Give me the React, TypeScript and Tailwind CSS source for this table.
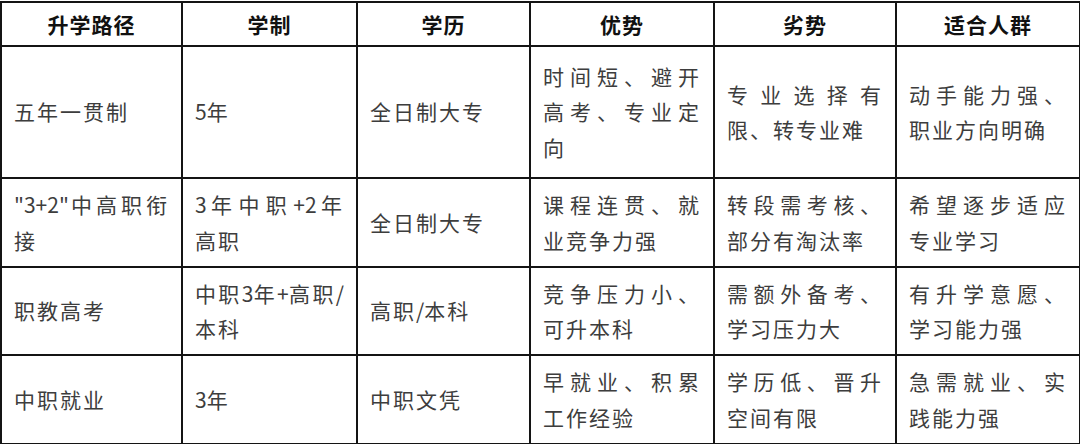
import React from "react";

const headers = ["升学路径", "学制", "学历", "优势", "劣势", "适合人群"];
const widths = [181, 175, 173, 184, 182, 184];
const rows: { h: string; cells: string[] }[] = [
  { h: "h-[132px]", cells: ["五年一贯制", "5年", "全日制大专", "时间短、避开高考、专业定向", "专业选择有限、转专业难", "动手能力强、职业方向明确"] },
  { h: "h-[89px]", cells: ["\"3+2\"中高职衔接", "3年中职+2年高职", "全日制大专", "课程连贯、就业竞争力强", "转段需考核、部分有淘汰率", "希望逐步适应专业学习"] },
  { h: "h-[88px]", cells: ["职教高考", "中职3年+高职/本科", "高职/本科", "竞争压力小、可升本科", "需额外备考、学习压力大", "有升学意愿、学习能力强"] },
  { h: "h-[89px]", cells: ["中职就业", "3年", "中职文凭", "早就业、积累工作经验", "学历低、晋升空间有限", "急需就业、实践能力强"] },
];

function Runs({ text }: { text: string }) {
  const parts = text.match(/[\x00-\x7f]+|[^\x00-\x7f]+/g) || [];
  return (
    <>
      {parts.map((p, i) =>
        /^[\x00-\x7f]+$/.test(p) ? (
          <span key={i} className="tracking-normal">
            {p}
          </span>
        ) : (
          <React.Fragment key={i}>{p}</React.Fragment>
        )
      )}
    </>
  );
}

export default function App() {
  return (
    <div className="w-[1080px] h-[444px] bg-white pt-px overflow-hidden" style={{ fontFamily: '"Noto Sans CJK SC", "Noto Sans", sans-serif' }}>
      <table className="table-fixed border-collapse w-[1079px]">
        <colgroup>
          {widths.map((w, i) => (
            <col key={i} style={{ width: w }} />
          ))}
        </colgroup>
        <thead>
          <tr className="h-[44px]">
            {headers.map((t) => (
              <th key={t} className="border-2 border-[#141414] text-center align-middle text-[21px] font-bold text-[#111] tracking-[1px] p-0 leading-none">
                {t}
              </th>
            ))}
          </tr>
        </thead>
        <tbody>
          {rows.map((r, i) => (
            <tr key={i} className={r.h}>
              {r.cells.map((c, j) => (
                <td key={j} className="border-2 border-[#141414] align-middle text-justify text-[21px] leading-[35.5px] tracking-[2px] text-[#3d3d3d] px-3 py-0">
                  <Runs text={c} />
                </td>
              ))}
            </tr>
          ))}
        </tbody>
      </table>
    </div>
  );
}
